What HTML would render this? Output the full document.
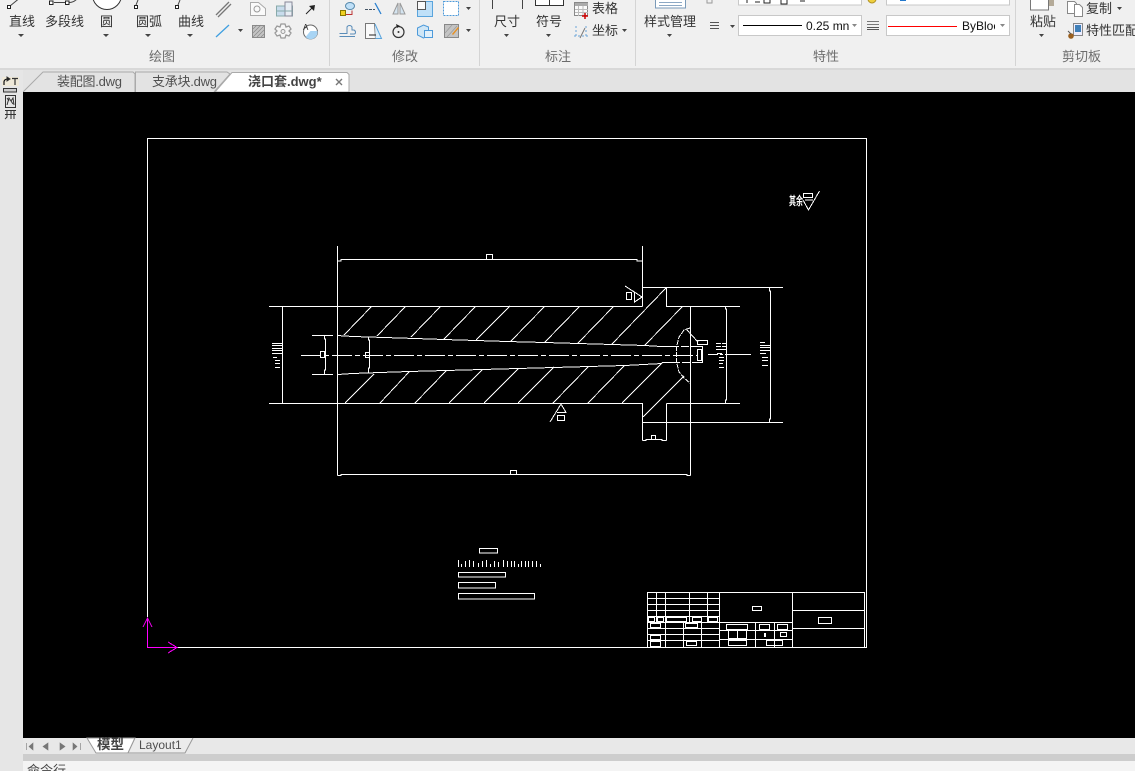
<!DOCTYPE html>
<html><head><meta charset="utf-8"><style>
html,body{margin:0;padding:0;width:1135px;height:771px;overflow:hidden;background:#f0f0f0}
svg{display:block;position:absolute;left:0;top:0}
text{font-family:"Liberation Sans","Noto Sans CJK SC",sans-serif;font-size:13px;fill:#333}
.p{fill:#6c6c6c}
.t{fill:#505050}
</style></head><body>
<svg width="1135" height="771" viewBox="0 0 1135 771" xmlns="http://www.w3.org/2000/svg">
<!-- ribbon -->
<rect width="1135" height="68" fill="#f0f0f0"/>
<rect y="68" width="1135" height="2" fill="#d8d8d8"/>
<rect y="70" width="1135" height="22" fill="#e3e3e3"/>
<g fill="#d4d4d4"><rect x="329" y="0" width="1" height="66"/><rect x="479" y="0" width="1" height="66"/><rect x="635" y="0" width="1" height="66"/><rect x="1015" y="0" width="1" height="66"/></g>

<!-- labels -->
<text x="9" y="26">直线</text><text x="45" y="26">多段线</text><text x="100" y="26">圆</text><text x="136" y="26">圆弧</text><text x="178" y="26">曲线</text>
<text x="494" y="26">尺寸</text><text x="536" y="26">符号</text><text x="592" y="13">表格</text><text x="592" y="35">坐标</text>
<text x="644" y="26">样式管理</text><text x="1030" y="26">粘贴</text><text x="1086" y="13">复制</text><text x="1086" y="35">特性匹配</text>
<text class="p" x="149" y="61">绘图</text><text class="p" x="392" y="61">修改</text><text class="p" x="545" y="61">标注</text><text class="p" x="813" y="61">特性</text><text class="p" x="1062" y="61">剪切板</text>

<!-- dropdown arrows -->
<g fill="#444">
<path d="M18 34h6l-3 3z"/><path d="M103 34h6l-3 3z"/><path d="M145 34h6l-3 3z"/><path d="M187 34h6l-3 3z"/><path d="M238 29h5l-2.500 3z"/>
<path d="M466 7h5l-2.500 3z"/><path d="M466 29h5l-2.500 3z"/><path d="M504 34h5l-2.500 3z"/><path d="M546 34h5l-2.500 3z"/><path d="M622 29h5l-2.500 3z"/>
<path d="M667 34h5l-2.500 3z"/><path d="M730 25h5l-2.500 3z"/><path d="M1039 34h5l-2.500 3z"/><path d="M1117 7h5l-2.500 3z"/>
</g>

<!-- draw icons -->
<g fill="none" stroke="#444">
<path d="M10 6 21 -3"/><rect x="7.500" y="5.500" width="3" height="3" fill="#fff" stroke="#222"/>
<path d="M54 2.500H66M69 2.500C73 2.500 75 1 77 -1"/><rect x="49.500" y="1" width="3.500" height="3.500" fill="#fff" stroke="#222"/><rect x="65.500" y="1" width="3.500" height="3.500" fill="#fff" stroke="#222"/>
<circle cx="107" cy="-5" r="14.500" fill="#fff" stroke="#333"/>
<path d="M136 5 138 0"/><rect x="134.500" y="5.500" width="3" height="3" fill="#fff" stroke="#222"/>
<path d="M178 5 180 0"/><rect x="175.500" y="5.500" width="3" height="3" fill="#fff" stroke="#222"/>
</g>
<g fill="none">
<path d="M216 15 229 2M218 17 231 4" stroke="#777" stroke-width="1.300"/>
<path d="M216 37 229 25" stroke="#3f9fe0" stroke-width="1.300"/>
<path d="M250.500 2.500h8l7 6v7h-15z" stroke="#aaa" fill="#fafafa"/><circle cx="257" cy="9" r="3" stroke="#999"/>
<rect x="276.500" y="6" width="16" height="10" fill="#c8dcec" stroke="#8aa"/><rect x="285" y="2" width="7" height="14" fill="#e8eef4" stroke="#889"/><path d="M276 11h16" stroke="#8aa"/>
<path d="M306 14 312 8" stroke="#222"/><path d="M309 6l6-1-1 6z" fill="#222"/>
<rect x="252.500" y="25.500" width="12" height="12" fill="#c4c4c4" stroke="#8a8a8a"/><path d="M253 29l4-4M253 33l8-8M253 37l11-11M257 37l7-7M261 37l3-3" stroke="#888" stroke-width=".7"/>
<path d="M281 24h4l1 3 3-1 2 3-2 2 2 2-2 3-3-1-1 3h-4l-1-3-3 1-2-3 2-2-2-2 2-3 3 1z" stroke="#9a9a9a" fill="#f6f6f6" stroke-width="1.300"/><circle cx="283" cy="31.500" r="2" stroke="#9a9a9a" fill="#f0f0f0"/>
<circle cx="310.500" cy="32" r="7" stroke="#666" fill="#fff"/><path d="M310.500 31h7a7 7 0 0 1-12 6z" fill="#a8d4f4"/>
</g>
<text x="303" y="30" style="font-size:8px;fill:#222">A</text>
<!-- modify icons -->
<g fill="none">
<rect x="340.500" y="10.500" width="5" height="5" fill="#f0d020" stroke="#887700"/><ellipse cx="350" cy="6" rx="4.500" ry="3.500" fill="#bfe0f8" stroke="#58a"/><path d="M346 14.500h6l0-4" stroke="#b33"/>
<path d="M365 9.500h10" stroke="#456" stroke-dasharray="3 1"/><path d="M375 3 381 14" stroke="#2b80d0" stroke-width="1.300"/>
<path d="M398 3v11h-5zM400 3v11h5z" fill="#d4e4f0" stroke="#999"/>
<rect x="417.500" y="1.500" width="15" height="15" fill="#bfe0f8" stroke="#5aa4dc"/><rect x="417.500" y="1.500" width="8" height="8" fill="#fafafa" stroke="#555"/>
<rect x="443.500" y="1.500" width="15" height="14" fill="#fff" stroke="#4d9ada" stroke-dasharray="2 1"/>
<path d="M339.500 36.500H355M339.500 33.500H347V27C348 25 351 25 352 27V30H354C356 31 356 34 354 34H350" stroke="#5a8cb8"/>
<path d="M365.500 23.500h9l1 15h-10z" stroke="#777" fill="#fafafa"/><path d="M375 24 381.500 38.500h-6" stroke="#5aa4dc" fill="#d8ecfa"/><path d="M369 35h7" stroke="#222"/>
<circle cx="398.500" cy="32" r="5.500" stroke="#333" stroke-width="1.200"/><circle cx="398.500" cy="32" r="1" fill="#333"/><path d="M396 24l4 2-3 2z" fill="#222"/>
<path d="M417.500 28l6-3 5 2v8l-5 3-6-3z" fill="#cfe6f6" stroke="#4d9ada"/><rect x="424.500" y="30.500" width="8" height="7" fill="#e2f0fa" stroke="#4d9ada"/>
<rect x="444.500" y="24.500" width="14" height="13" fill="#c4c4c4" stroke="#888"/><path d="M447 37l10-11M445 33l7-8" stroke="#999" stroke-width=".7"/><path d="M452 34l6-7 1 1-6 7z" fill="#e89020"/>
</g>
<!-- annotate icons -->
<g fill="none">
<path d="M492.500 0v9M522.500 0v9" stroke="#444"/>
<path d="M535.500 -1v6.500h28v-7" stroke="#333" fill="#fff"/><path d="M549.500 0v5" stroke="#333"/>
<rect x="574.500" y="2.500" width="13" height="13" fill="#fafafa" stroke="#888"/><path d="M575 3h13v3h-13z" fill="#aaa"/><path d="M578.500 6v10M583 6v10M575 9.500h13M575 12.500h13" stroke="#bbb"/>
<path d="M585 13v6M582 16h6" stroke="#c00" stroke-width="1.500"/>
<path d="M576 26v10M586 26v10M574 36h14" stroke="#6aa5d8" stroke-dasharray="2 2"/><path d="M580 38 585 28" stroke="#777"/>
<rect x="655.500" y="-3" width="30" height="11" fill="#fff" stroke="#7a9ab8"/><path d="M659 2.500h23M659 5.500h23" stroke="#8ca8c4"/>
<path d="M707 0v3h5v-3" stroke="#999"/>
<path d="M710 22.500h9M710 25.500h9M710 28.500h9" stroke="#555"/>
<path d="M867 21.500h12M867 24.500h12" stroke="#777"/><path d="M867 27.500h12M867 29.500h12" stroke="#555"/>
<circle cx="872" cy="-1" r="4" fill="#efd040" stroke="#b09020"/>
</g>
<!-- combos -->
<g fill="#fff" stroke="#c8c8c8">
<rect x="738.500" y="-3" width="123" height="8"/><rect x="886.500" y="-3" width="123" height="8"/>
<rect x="738.500" y="15.500" width="123" height="20"/><rect x="886.500" y="15.500" width="123" height="20"/>
</g>
<rect x="743" y="25" width="59" height="1" fill="#000"/>
<rect x="888" y="26" width="69" height="1" fill="#ff0000"/>
<text x="806" y="30" style="font-size:12px;fill:#111">0.25 mn</text>
<svg x="962" y="15" width="33" height="20"><text x="0" y="15" style="font-size:12px;fill:#111">ByBlock</text></svg>
<path d="M852 24h5l-2.500 3zM1000 24h5l-2.500 3z" fill="#888"/>
<path d="M747 0v3M760 2h-5M764 -1h6v4h-6zM781 -2h6v6h-6zM800 1h5" stroke="#222" fill="none"/>
<rect x="900" y="-2" width="6" height="3" fill="#2277cc"/>
<!-- clipboard icons -->
<rect x="1046" y="-2" width="8" height="8" fill="#b4aa98"/>
<rect x="1030.500" y="-3" width="18" height="13" fill="#fff" stroke="#777"/>
<path d="M1067.500 1.500h7l2 2v10h-9z" fill="#fff" stroke="#888"/><path d="M1074.500 4.500h5l3 3v9h-8z" fill="#fff" stroke="#888"/>
<rect x="1073.500" y="23.500" width="9" height="12" fill="#eef" stroke="#888"/><rect x="1075" y="25" width="6" height="7" fill="#3f7fb8"/>
<circle cx="1071" cy="36" r="2.800" fill="#9a6020"/><path d="M1068 31l3 3" stroke="#555"/>

<!-- tabs -->
<path d="M23 92 43 72H133l2 2V92" fill="#e3e3e3" stroke="#aaa"/>
<path d="M135.500 92V72H227l3 2-16 18" fill="#e3e3e3" stroke="#aaa"/>
<path d="M215 92 232 72.500H347l2 2V92z" fill="#fff" stroke="#aaa"/>
<text class="t" x="57" y="86" textLength="65" lengthAdjust="spacing">装配图.dwg</text><text class="t" x="152" y="86" textLength="65" lengthAdjust="spacing">支承块.dwg</text>
<text x="248" y="86" style="font-weight:bold;fill:#444">浇口套.dwg*</text>
<path d="M336 79l6 6M342 79l-6 6" stroke="#777" stroke-width="1.400"/>

<!-- left strip -->
<rect x="0" y="92" width="23" height="679" fill="#e6e6e6"/>
<rect x="0" y="70" width="23" height="22" fill="#e6e6e6"/>
<rect x="2" y="77" width="17" height="9" fill="#efe9d8"/>
<g fill="none" stroke="#333">
<path d="M4 85v-3c0-2 2-3 4-3h1" stroke="#111" stroke-width="1.200"/><path d="M7 77l3 2-3 2z" fill="#111"/>
<path d="M12 78.500h6M15 78v7" stroke-width="1.200"/>
<rect x="3.500" y="88.500" width="13" height="3.500" fill="#ccc"/>
<rect x="5.500" y="95.500" width="10" height="12"/><path d="M7 105l2-7 2 3 2-3 1 7M7 98l2 3M11 101l2 3"/>
<path d="M5 110.500h11M7 111v6l-2 2M11 111v8M14 111v8M5 114.500h11"/>
</g>

<!-- canvas -->
<rect x="23" y="92" width="1112" height="646" fill="#000"/>

<g shape-rendering="crispEdges" fill="none" stroke="#fff" stroke-width="1">
<!-- frame -->
<path d="M147.500 617V138.500H866.500V647.500H178"/>
<!-- UCS -->
<path d="M147.500 618V647.500H178M143 627l4.500-9 4.500 9M168 642l9 5.500-9 5.500" stroke="#ff00ff"/>

<!-- part outline -->
<path d="M337.500 246V475.500"/>
<path d="M642.500 246V306.500M269 306.500H642.500M269 403.500H642.500V440.500M282.500 306.500V403.500"/>
<path d="M642.500 287.500H783M666.500 287.500V306.500H740M690.500 306.500V475.500M666.500 403.500H740M666.500 403.500V440.500M642.500 422.500H783"/>
<path d="M337.500 261H341V259.500H637V261H642"/>
<path d="M337.500 475.500H341V474.500H687V475.500H690.500"/>
<path d="M642.500 440.500H646V439.500H662V440.500H666.500"/>
<rect x="651.500" y="435.500" width="4" height="4"/>
<rect x="486.500" y="254.500" width="6" height="5"/>
<rect x="510.500" y="470.500" width="6" height="4"/>
<!-- bore -->
<path d="M337 335.500 353 336.500 384 337.500 415 338.500 444 339.500 476 340.500 507 341.500 545 342.500 578 343.500 612 344.500 645 345.500 661 346.500"/>
<path d="M338 374.500 352 373.500 380 372.500 409 371.500 446 370.500 482 369.500 518 368.500 554 367.500 589 366.500 625 365.500 662 363.500"/>
<path d="M661 346.500H703M662 362.500H703" stroke-dasharray="18 2 8 2"/>
<!-- centerline -->
<path d="M301 355.500H698" stroke-dasharray="20 3 5 3"/>
<path d="M708 354.500H751" stroke-dasharray="10 2 3 2 40"/>
<!-- hatching -->
<path d="M372 306 344 335M406 306 377 336M441 306 411 337M476 306 444 339M510 306 476 340M545 306 511 341M580 306 545 342M614 306 578 343M666 288 612 344M683 306 645 345"/>
<path d="M374 374 345 403M409 372 380 403M446 371 415 403M482 370 449 403M518 369 484 403M554 367 518 403M589 366 553 403M625 365 588 403M662 363 622 403M684 376 643 417"/>
<!-- left dims -->
<path d="M312 335.500H333M312 374.500H333M324.500 336V339H325.500V370H324.500V374"/>
<rect x="320.500" y="351.500" width="4" height="6"/>
<path d="M368.500 337V340H369.500V368H368.500V373"/>
<rect x="365.500" y="352.500" width="4" height="5"/>
<path d="M272 343.500H282M272 345.500H282M272 348.500H282M272 350.500H282M272 353.500H282M273 357.500H277M275 360.500H280M275 363.500H280M275 367.500H280"/>
<!-- right dims -->
<path d="M725.500 306V309H726.500V400H725.500V403"/>
<path d="M769.500 287V291H770.500V419H769.500V422"/>
<path d="M716 343.500H721M722 343.500H726M716 346.500H721M722 346.500H726M716 349.500H726M717 353.500H722M719 357.500H724M719 360.500H724M719 363.500H723M719 367.500H724"/>
<path d="M760 342.500H765M760 345.500H770M760 347.500H770M760 350.500H770M760 353.500H766M762 357.500H768M762 360.500H768M762 365.500H768"/>
<!-- spherical end -->
<path d="M690 328 684 330 679 337 676.500 347 676.500 362 679 372 684 378 690 383" stroke-dasharray="5 1"/>
<path d="M687 330 698 342"/>
<rect x="697.500" y="340.500" width="10" height="4"/>
<rect x="697.500" y="349.500" width="4" height="11"/>
<path d="M702.500 346V363"/>
<!-- roughness -->
<rect x="626.500" y="292.500" width="5" height="7"/>
<path d="M625 286 642 297 634.500 302V292"/>
<path d="M550 422 561 404 566 412.500H557"/>
<rect x="557.500" y="415.500" width="7" height="5"/>
<!-- top right symbol -->
<rect x="803.500" y="193.500" width="9" height="4"/>
<path d="M803 200 808.500 210 819.500 191M805 200H813"/>
<!-- note block -->
<rect x="479.500" y="548.500" width="18" height="4.500"/>
<path d="M458.500 560V567M461.500 564V567M465.500 561V567M469.500 560V567M473.500 561V567M478.500 563V567M482.500 561V567M486.500 560V567M490.500 564V567M494.500 561V567M498.500 562V567M503.500 560V567M507.500 561V567M511.500 561V567M514.500 561V567M518.500 564V567M521.500 561V567M525.500 561V567M528.500 561V567M532.500 561V567M536.500 561V567M540.500 564V567"/>
<rect x="458.500" y="572.500" width="47" height="4.500"/>
<rect x="458.500" y="582.500" width="37" height="5.500"/>
<rect x="458.500" y="593.500" width="76" height="5.500"/>
<!-- title block -->
<path d="M647.500 647V592.500H864.500V647M647.500 598.500H719M647.500 604.500H719M647.500 610.500H719M647.500 616.500H719M647.500 622.500H792M647.500 628.500H719M647.500 634.500H719M647.500 640.500H719"/>
<path d="M656.500 592V622M665.500 592V647M689.500 592V622M707.500 592V622M719.500 592V647M792.500 592V647M683.500 622V647M701.500 622V647"/>
<path d="M792 610.500H864M792 628.500H864M755.500 622V647M774.500 622V647M719 630.500H792M719 639.500H792"/>
<rect x="752.500" y="606.500" width="9" height="4"/>
<rect x="818.500" y="617.500" width="13" height="6"/>
<rect x="648.500" y="617.500" width="6" height="4"/><rect x="657.500" y="617.500" width="6" height="4"/><rect x="666.500" y="617.500" width="20" height="4"/><rect x="692.500" y="617.500" width="9" height="4"/><rect x="708.500" y="617.500" width="9" height="4"/>
<rect x="650.500" y="623.500" width="10" height="4"/><rect x="685.500" y="623.500" width="12" height="4"/>
<rect x="650.500" y="635.500" width="10" height="4"/><rect x="650.500" y="641.500" width="10" height="5"/><rect x="686.500" y="641.500" width="10" height="4"/>
<rect x="726.500" y="624.500" width="21" height="5"/><rect x="759.500" y="624.500" width="10" height="5"/><rect x="777.500" y="624.500" width="10" height="5"/>
<rect x="728.500" y="630.500" width="9" height="8"/><rect x="737.500" y="630.500" width="9" height="8"/><rect x="728.500" y="640.500" width="18" height="5"/>
<rect x="764.500" y="633.500" width="1" height="3"/><rect x="780.500" y="632.500" width="6" height="4"/><rect x="766.500" y="640.500" width="16" height="5"/>
</g>
<text transform="translate(789 205) scale(1 1.700)" x="0" y="0" style="font-size:7px;fill:#fff;font-weight:bold">其余</text>

<!-- bottom -->
<rect x="23" y="738" width="1112" height="16" fill="#e8e8e8"/>
<rect x="23" y="754" width="1112" height="7" fill="#cdcdcd"/>
<rect x="23" y="761" width="1112" height="10" fill="#f4f4f4"/>
<path d="M26.500 743v7M33 743v7l-4-3.500zM48 743v7l-5-3.500zM60 743v7l5-3.500zM73 743v7l4-3.500zM80.500 743v7" fill="#777" stroke="#777" stroke-width=".6"/>
<path d="M87 738 96 753H128L135 738z" fill="#fff" stroke="#999"/>
<path d="M135 738 128 753H185L193 738" fill="#ececec" stroke="#999"/>
<text x="97" y="749" style="font-weight:bold;font-size:13.500px;fill:#444">模型</text>
<text class="t" x="139" y="749" style="font-size:12px">Layout1</text>
<text x="27" y="775" style="fill:#444">命令行</text>
</svg>
</body></html>
